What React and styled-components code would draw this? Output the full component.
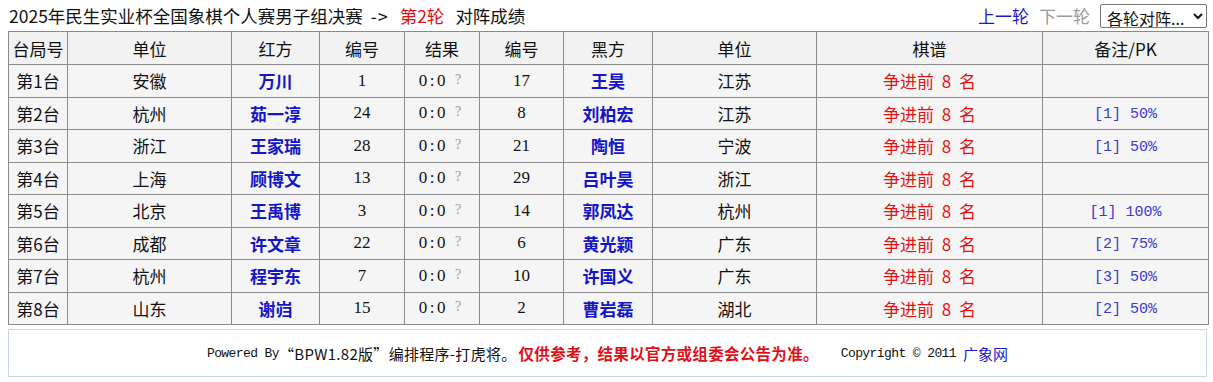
import React from "react";
import styled, { createGlobalStyle } from "styled-components";

const GlobalStyle = createGlobalStyle`
  body {
    margin: 0;
    background: #fff;
    font-family: "Liberation Serif", "Noto Sans CJK SC", serif;
    color: #111;
  }
`;

const Page = styled.div`
  padding: 2px 6px 0 8px;
`;

const TopBar = styled.div`
  height: 27px;
  display: flex;
  align-items: center;
  justify-content: space-between;
  margin-bottom: 2px;
`;

const Title = styled.div`
  font-family: "Noto Sans CJK SC", sans-serif;
  font-size: 17.5px;
  padding-left: 1px;
  color: #111;
  .arrow {
    margin-left: 8px;
    letter-spacing: 1px;
  }
  .round {
    color: #e01010;
    margin: 0 11px 0 11px;
  }
`;

const Nav = styled.div`
  display: flex;
  align-items: center;
  gap: 10px;
  font-family: "Noto Sans CJK SC", sans-serif;
  font-size: 17px;
`;

const NavLink = styled.span`
  color: ${({ $disabled }) => ($disabled ? "#999" : "#1a1acc")};
`;

const RoundSelect = styled.select`
  width: 107px;
  height: 24px;
  font-family: "Noto Sans CJK SC", sans-serif;
  font-size: 16px;
  border: 1px solid #767676;
  border-radius: 2px;
  background: #fff;
  color: #111;
  padding: 0 2px;
`;

const Table = styled.table`
  width: 1200px;
  border-collapse: collapse;
  table-layout: fixed;
  font-size: 17px;
  th,
  td {
    border: 1px solid #8a8a8a;
    text-align: center;
    padding: 0;
    height: 31.5px;
    background: #f2f2f2;
    white-space: nowrap;
    overflow: hidden;
  }
  th {
    font-weight: normal;
    font-family: "Noto Sans CJK SC", sans-serif;
    height: 32px;
  }
  td {
    background: #f5f5f5;
  }
`;

const Cjk = styled.span`
  font-family: "Noto Sans CJK SC", sans-serif;
`;

const Player = styled.span`
  font-family: "Noto Sans CJK SC", sans-serif;
  font-weight: bold;
  color: #1414c8;
`;

const Score = styled.span`
  letter-spacing: 2.5px;
  margin-left: -4px;
`;

const Unknown = styled.span`
  color: #9a9a9a;
  font-size: 14px;
  margin-left: 7px;
  position: relative;
  top: -2px;
`;

const Note = styled.span`
  color: #e01515;
  font-family: "Noto Sans CJK SC", sans-serif;
  word-spacing: 4px;
`;

const Pk = styled.span`
  color: #3b3bd0;
  font-family: "Liberation Mono", monospace;
  font-size: 15px;
`;

const Footer = styled.div`
  margin-top: 4px;
  width: 1197px;
  height: 46px;
  border: 1px solid #cad6e2;
  background: #fff;
  display: flex;
  align-items: center;
  justify-content: center;
  font-family: "Liberation Mono", "Noto Sans CJK SC", monospace;
  font-size: 13px;
  letter-spacing: -0.6px;
  color: #111;
  white-space: pre;
  .cjk {
    font-family: "Noto Sans CJK SC", sans-serif;
    font-size: 15px;
    letter-spacing: 0.3px;
  }
  .warn {
    color: #e0101a;
    font-weight: bold;
    font-family: "Noto Sans CJK SC", sans-serif;
    font-size: 15.5px;
    letter-spacing: 0.3px;
    margin-left: 2px;
    margin-right: 22px;
  }
  .site {
    color: #1a1acc;
    font-family: "Noto Sans CJK SC", sans-serif;
    font-size: 15px;
    letter-spacing: 0;
    margin-left: 7px;
  }
`;

const widths = [59, 164, 88, 85, 75, 84, 89, 164, 226, 166];
const headers = ["台局号", "单位", "红方", "编号", "结果", "编号", "黑方", "单位", "棋谱", "备注/PK"];

const rows = [
  ["第1台", "安徽", "万川", 1, 17, "王昊", "江苏", ""],
  ["第2台", "杭州", "茹一淳", 24, 8, "刘柏宏", "江苏", "[1] 50%"],
  ["第3台", "浙江", "王家瑞", 28, 21, "陶恒", "宁波", "[1] 50%"],
  ["第4台", "上海", "顾博文", 13, 29, "吕叶昊", "浙江", ""],
  ["第5台", "北京", "王禹博", 3, 14, "郭凤达", "杭州", "[1] 100%"],
  ["第6台", "成都", "许文章", 22, 6, "黄光颖", "广东", "[2] 75%"],
  ["第7台", "杭州", "程宇东", 7, 10, "许国义", "广东", "[3] 50%"],
  ["第8台", "山东", "谢岿", 15, 2, "曹岩磊", "湖北", "[2] 50%"],
];

export default function App() {
  return (
    <Page>
      <GlobalStyle />
      <TopBar>
        <Title>
          2025年民生实业杯全国象棋个人赛男子组决赛<span className="arrow">-&gt;</span>
          <span className="round">第2轮</span>对阵成绩
        </Title>
        <Nav>
          <NavLink>上一轮</NavLink>
          <NavLink $disabled>下一轮</NavLink>
          <RoundSelect defaultValue="all">
            <option value="all">各轮对阵...</option>
          </RoundSelect>
        </Nav>
      </TopBar>
      <Table>
        <colgroup>
          {widths.map((w, i) => (
            <col key={i} style={{ width: w }} />
          ))}
        </colgroup>
        <thead>
          <tr>
            {headers.map((h, i) => (
              <th key={i}>{h}</th>
            ))}
          </tr>
        </thead>
        <tbody>
          {rows.map((r) => (
            <tr key={r[0]}>
              <td>
                <Cjk>{r[0]}</Cjk>
              </td>
              <td>
                <Cjk>{r[1]}</Cjk>
              </td>
              <td>
                <Player>{r[2]}</Player>
              </td>
              <td>{r[3]}</td>
              <td>
                <Score>0:0</Score>
                <Unknown>?</Unknown>
              </td>
              <td>{r[4]}</td>
              <td>
                <Player>{r[5]}</Player>
              </td>
              <td>
                <Cjk>{r[6]}</Cjk>
              </td>
              <td>
                <Note>争进前 8 名</Note>
              </td>
              <td>
                <Pk>{r[7]}</Pk>
              </td>
            </tr>
          ))}
        </tbody>
      </Table>
      <Footer>
        Powered By<span className="cjk">“BPW1.82版”编排程序-打虎将。</span>
        <span className="warn">仅供参考，结果以官方或组委会公告为准。</span>
        Copyright © 2011<span className="site">广象网</span>
      </Footer>
    </Page>
  );
}
